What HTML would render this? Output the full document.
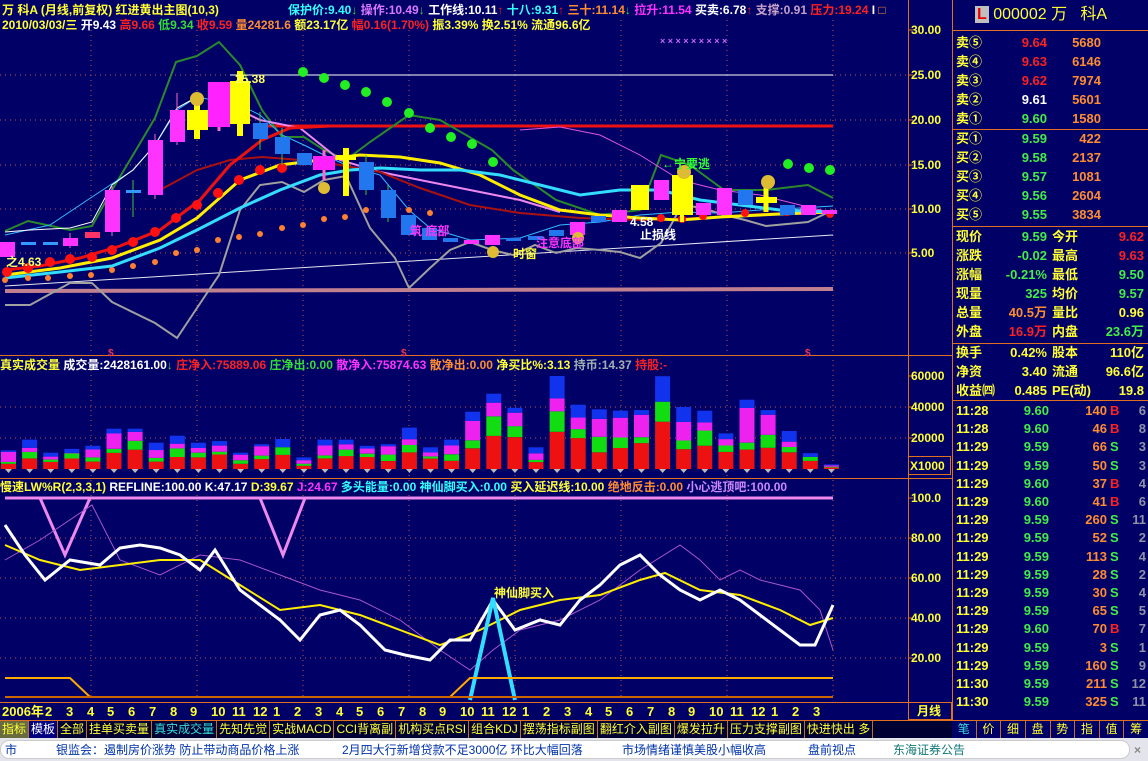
<!DOCTYPE html>
<html><head><meta charset="utf-8"><style>
*{margin:0;padding:0;box-sizing:border-box}
body{width:1148px;height:761px;background:#000066;overflow:hidden;position:relative;font-family:"Liberation Sans","Noto Sans CJK SC",sans-serif;font-weight:bold;font-size:12px}
.t{position:absolute;white-space:nowrap;line-height:14px}
.r{position:absolute;white-space:nowrap;line-height:18px;font-size:13px}
.y{color:#ffff33}.w{color:#fff}.rd{color:#ff2020}.g{color:#33dd33}.o{color:#ff8c30}.m{color:#ff33ff}.c{color:#33ffff}.gr{color:#9090a0}
.ax{position:absolute;left:911px;font-size:12px;color:#ffff33;line-height:12px}
.tb{padding:0 2px;border-right:1px solid #c07020}
</style></head><body>
<svg width="1148" height="761" style="position:absolute;left:0;top:0">
<g stroke="#c05050" stroke-dasharray="1,4" stroke-width="1">
<line x1="0" y1="75" x2="908" y2="75"/><line x1="0" y1="120" x2="908" y2="120"/><line x1="0" y1="165" x2="908" y2="165"/><line x1="0" y1="209" x2="908" y2="209"/><line x1="0" y1="253" x2="908" y2="253"/>
<line x1="91" y1="20" x2="91" y2="700"/><line x1="197" y1="20" x2="197" y2="700"/><line x1="303" y1="20" x2="303" y2="700"/><line x1="409" y1="20" x2="409" y2="700"/><line x1="515" y1="20" x2="515" y2="700"/><line x1="621" y1="20" x2="621" y2="700"/><line x1="727" y1="20" x2="727" y2="700"/><line x1="833" y1="20" x2="833" y2="700"/>
<line x1="0" y1="407" x2="908" y2="407"/><line x1="0" y1="438" x2="908" y2="438"/>
<line x1="0" y1="538" x2="908" y2="538"/><line x1="0" y1="578" x2="908" y2="578"/><line x1="0" y1="618" x2="908" y2="618"/><line x1="0" y1="658" x2="908" y2="658"/>
</g>
<g stroke="#e07020" stroke-width="1" fill="none">
<line x1="908.5" y1="0" x2="908.5" y2="720"/><line x1="952.5" y1="0" x2="952.5" y2="738"/>
<line x1="0" y1="355.5" x2="952" y2="355.5"/><line x1="0" y1="478.5" x2="952" y2="478.5"/><line x1="0" y1="702.5" x2="952" y2="702.5"/><line x1="0" y1="720.5" x2="1148" y2="720.5"/>
<line x1="952" y1="30.5" x2="1148" y2="30.5"/><line x1="952" y1="129.5" x2="1148" y2="129.5"/><line x1="952" y1="226.5" x2="1148" y2="226.5"/><line x1="952" y1="343.5" x2="1148" y2="343.5"/><line x1="952" y1="400.5" x2="1148" y2="400.5"/>
<rect x="908.5" y="456.5" width="42" height="18"/>
<rect x="908.5" y="702.5" width="43" height="17"/>
</g>
<g stroke="#e07020"><line x1="908" y1="30" x2="913" y2="30"/><line x1="908" y1="75" x2="913" y2="75"/><line x1="908" y1="120" x2="913" y2="120"/><line x1="908" y1="165" x2="913" y2="165"/><line x1="908" y1="209" x2="913" y2="209"/><line x1="908" y1="253" x2="913" y2="253"/><line x1="908" y1="376" x2="913" y2="376"/><line x1="908" y1="407" x2="913" y2="407"/><line x1="908" y1="438" x2="913" y2="438"/><line x1="908" y1="498" x2="913" y2="498"/><line x1="908" y1="538" x2="913" y2="538"/><line x1="908" y1="578" x2="913" y2="578"/><line x1="908" y1="618" x2="913" y2="618"/><line x1="908" y1="658" x2="913" y2="658"/></g>
<line x1="230" y1="75" x2="833" y2="75" stroke="#ffffff" stroke-width="1"/>
<line x1="260" y1="126" x2="833" y2="126" stroke="#ee1111" stroke-width="3"/>
<line x1="5" y1="291" x2="833" y2="289" stroke="#c08090" stroke-width="4"/>
<line x1="5" y1="286" x2="833" y2="235" stroke="#ffffff" stroke-width="1" opacity=".9"/>
<polyline fill="none" stroke="#2a8a2a" stroke-width="2" points="5,231 28,221 70,230 92,226 112,190 133,155 155,118 176,62 197,56 219,42 240,65 262,110 282,137 304,137 324,150 346,160 370,142 409,115 440,120 492,150 513,170 556,200 600,215 640,210 661,155 690,165 724,190 766,190 808,185 833,198"/>
<polyline fill="none" stroke="#a0a0a0" stroke-width="2" points="5,305 30,305 70,283 92,283 112,302 155,323 177,338 197,308 219,275 240,210 260,185 282,182 304,192 324,180 346,176 370,228 395,258 409,288 430,268 450,250 470,242 492,250 513,255 535,245 556,253 577,248 600,250 620,252 640,258 661,243 682,205 703,208 724,215 745,220 766,226 787,224 808,222 833,210"/>
<polyline fill="none" stroke="#ee88ee" stroke-width="2" points="219,100 260,120 300,128 340,160 380,172 420,180 470,190 520,200 560,212"/>
<polyline fill="none" stroke="#dd55dd" stroke-width="1" points="520,130 560,127 600,135 640,155 680,180 720,190 760,195 800,205 833,213"/>
<polyline fill="none" stroke="#33bbff" stroke-width="1" points="5,235 50,225 92,197 133,170 155,145 177,110 197,97 240,105 260,115 282,135 304,145 324,155 346,165 380,175 409,210 430,228 470,240 520,238 560,225 600,222 640,215 680,212 720,213 760,210 800,208 833,206"/>
<polyline fill="none" stroke="#ffffff" stroke-width="1" points="5,232 30,230 70,228 92,222 112,185 133,170 155,145 177,108 197,97"/>
<polyline fill="none" stroke="#aa1111" stroke-width="2" points="160,190 197,170 230,160 262,157 300,160 340,165 380,172 420,188 470,205 520,213 580,218 640,220 700,218 760,214 833,212"/>
<polyline fill="none" stroke="#ee1111" stroke-width="3" points="5,270 40,266 80,258 120,246 160,230 200,200 230,165 262,140 290,128 330,126"/>
<polyline fill="none" stroke="#ffee00" stroke-width="3" points="5,275 60,268 112,258 160,240 197,218 240,180 280,165 320,160 360,155 400,157 440,163 480,175 520,195 560,210 600,215 640,218 680,220 720,217 780,214 833,212"/>
<polyline fill="none" stroke="#33ddff" stroke-width="3" points="5,278 60,272 112,266 160,248 197,230 240,208 280,190 320,175 350,170 380,168 420,170 460,170 500,175 540,185 580,195 620,190 660,190 700,200 740,205 780,210 833,212"/>
<g fill="#22ee22"><circle cx="303" cy="72" r="5"/><circle cx="324" cy="78" r="5"/><circle cx="345" cy="85" r="5"/><circle cx="366" cy="92" r="5"/><circle cx="387" cy="102" r="5"/><circle cx="409" cy="113" r="5"/><circle cx="430" cy="128" r="5"/><circle cx="451" cy="137" r="5"/><circle cx="472" cy="144" r="5"/><circle cx="493" cy="162" r="5"/><circle cx="788" cy="164" r="5"/><circle cx="809" cy="168" r="5"/><circle cx="830" cy="170" r="5"/></g>
<g fill="#ff1111"><circle cx="7" cy="272" r="5"/><circle cx="28" cy="268" r="5"/><circle cx="50" cy="262" r="5"/><circle cx="70" cy="259" r="5"/><circle cx="92" cy="257" r="5"/><circle cx="112" cy="250" r="5"/><circle cx="133" cy="242" r="5"/><circle cx="155" cy="232" r="5"/><circle cx="176" cy="218" r="5"/><circle cx="197" cy="205" r="5"/><circle cx="218" cy="193" r="5"/><circle cx="239" cy="180" r="5"/><circle cx="260" cy="170" r="5"/><circle cx="282" cy="168" r="5"/><circle cx="661" cy="218" r="4"/><circle cx="682" cy="219" r="4"/><circle cx="703" cy="216" r="4"/><circle cx="745" cy="213" r="4"/><circle cx="787" cy="212" r="4"/><circle cx="830" cy="214" r="4"/></g>
<g fill="#ff8030"><circle cx="5" cy="280" r="3"/><circle cx="28" cy="278" r="3"/><circle cx="48" cy="278" r="3"/><circle cx="70" cy="276" r="3"/><circle cx="91" cy="275" r="3"/><circle cx="112" cy="270" r="3"/><circle cx="133" cy="266" r="3"/><circle cx="155" cy="262" r="3"/><circle cx="176" cy="253" r="3"/><circle cx="197" cy="250" r="3"/><circle cx="218" cy="240" r="3"/><circle cx="239" cy="237" r="3"/><circle cx="260" cy="234" r="3"/><circle cx="282" cy="228" r="3"/><circle cx="303" cy="225" r="3"/><circle cx="324" cy="219" r="3"/><circle cx="345" cy="217" r="3"/><circle cx="366" cy="210" r="3"/><circle cx="387" cy="208" r="3"/><circle cx="409" cy="210" r="3"/><circle cx="430" cy="213" r="3"/></g>
<g stroke-width="1">
<rect x="0" y="242" width="15" height="15" fill="#ff33ff"/>
<rect x="21" y="242" width="15" height="3" fill="#3399ff"/><rect x="43" y="242" width="15" height="3" fill="#3399ff"/>
<line x1="70" y1="233" x2="70" y2="248" stroke="#ff66cc"/><rect x="63" y="238" width="15" height="8" fill="#ff33ff"/>
<rect x="85" y="232" width="15" height="6" fill="#ff3366"/>
<line x1="112" y1="186" x2="112" y2="236" stroke="#ff66cc"/><rect x="105" y="190" width="15" height="42" fill="#ff33ff"/>
<line x1="133" y1="180" x2="133" y2="217" stroke="#33cc33"/><rect x="126" y="190" width="15" height="3" fill="#3399ff"/>
<line x1="155" y1="134" x2="155" y2="199" stroke="#ff66cc"/><rect x="148" y="140" width="15" height="55" fill="#ff33ff"/>
<line x1="177" y1="93" x2="177" y2="145" stroke="#ff66cc"/><rect x="170" y="110" width="15" height="32" fill="#ff33ff"/>
<line x1="197" y1="97" x2="197" y2="139" stroke="#ffff00" stroke-width="6"/><rect x="187" y="110" width="21" height="20" fill="#ffff00"/>
<line x1="219" y1="82" x2="219" y2="131" stroke="#ff66cc" stroke-width="3"/><rect x="208" y="82" width="22" height="45" fill="#ff22ff"/>
<line x1="240" y1="71" x2="240" y2="136" stroke="#ffff00" stroke-width="6"/><rect x="230" y="81" width="20" height="43" fill="#ffff00"/>
<line x1="260" y1="112" x2="260" y2="150" stroke="#33cc33"/><rect x="253" y="123" width="15" height="16" fill="#2277ee"/>
<line x1="282" y1="128" x2="282" y2="165" stroke="#33cc33"/><rect x="275" y="137" width="15" height="17" fill="#2277ee"/>
<rect x="297" y="153" width="15" height="12" fill="#2277ee"/>
<line x1="324" y1="150" x2="324" y2="180" stroke="#ff66cc" stroke-width="3"/><rect x="313" y="156" width="22" height="14" fill="#ff22ff"/>
<line x1="346" y1="148" x2="346" y2="196" stroke="#ffff00" stroke-width="6"/><rect x="336" y="155" width="20" height="5" fill="#ffff00"/>
<line x1="366" y1="155" x2="366" y2="195" stroke="#33cc33"/><rect x="359" y="162" width="15" height="28" fill="#2277ee"/>
<line x1="388" y1="185" x2="388" y2="222" stroke="#33cc33"/><rect x="381" y="190" width="15" height="28" fill="#2277ee"/>
<rect x="401" y="215" width="15" height="20" fill="#2277ee"/>
<rect x="422" y="228" width="15" height="12" fill="#2277ee"/>
<rect x="443" y="238" width="15" height="4" fill="#2277ee"/>
<rect x="464" y="240" width="15" height="4" fill="#ff33ff"/>
<rect x="485" y="235" width="15" height="10" fill="#ff33ff"/>
<rect x="506" y="238" width="15" height="3" fill="#2277ee"/>
<rect x="528" y="236" width="15" height="4" fill="#2277ee"/>
<rect x="549" y="230" width="15" height="6" fill="#2277ee"/>
<rect x="570" y="222" width="15" height="13" fill="#ff33ff"/>
<rect x="591" y="216" width="15" height="6" fill="#2277ee"/>
<rect x="612" y="210" width="15" height="12" fill="#ff33ff"/>
<rect x="631" y="185" width="18" height="25" fill="#ffff00"/>
<rect x="654" y="180" width="15" height="20" fill="#ff33ff"/>
<line x1="682" y1="170" x2="682" y2="222" stroke="#ffff00" stroke-width="4"/><rect x="672" y="175" width="21" height="40" fill="#ffff00"/>
<rect x="696" y="203" width="15" height="12" fill="#ff33ff"/>
<rect x="717" y="188" width="15" height="27" fill="#ff33ff"/>
<rect x="738" y="190" width="15" height="15" fill="#2277ee"/>
<line x1="766" y1="180" x2="766" y2="212" stroke="#ffff00" stroke-width="5"/><rect x="756" y="197" width="21" height="6" fill="#ffff00"/>
<rect x="780" y="205" width="15" height="10" fill="#2277ee"/>
<rect x="801" y="205" width="15" height="10" fill="#ff33ff"/>
<rect x="822" y="210" width="15" height="4" fill="#ff33ff"/>
</g>
<g fill="#ddbb33"><circle cx="197" cy="99" r="7"/><circle cx="324" cy="188" r="6"/><circle cx="493" cy="252" r="6"/><circle cx="578" cy="238" r="6"/><circle cx="684" cy="172" r="7"/><circle cx="768" cy="182" r="7"/></g>
<g fill="#cc66ff" font-size="9"><text x="660" y="44">× × × × × × × × ×</text></g>
<g fill="#ee3355"><text x="108" y="356" font-size="10">$</text><text x="401" y="356" font-size="10">$</text><text x="805" y="356" font-size="10">$</text></g>
<g id="vol"></g>
<line x1="5" y1="498" x2="833" y2="498" stroke="#ee88ee" stroke-width="3"/>
<polyline fill="none" stroke="#ee88ee" stroke-width="3" points="40,498 65,555 90,498"/>
<polyline fill="none" stroke="#ee88ee" stroke-width="3" points="260,498 283,555 305,498"/>
<polyline fill="none" stroke="#aa55cc" stroke-width="1" points="5,560 40,540 92,505 120,560 160,575 200,555 240,560 280,575 320,590 360,600 400,620 440,650 470,670 493,650 520,630 560,620 600,600 640,570 680,545 700,560 720,580 740,570 760,580 800,590 820,610 833,650"/>
<polyline fill="none" stroke="#ffee00" stroke-width="2" points="5,545 40,560 80,570 120,565 160,560 200,560 240,585 280,610 320,605 360,615 400,630 440,645 480,630 520,610 560,600 600,595 640,580 665,573 700,590 740,595 780,610 810,625 833,618"/>
<polyline fill="none" stroke="#ffffff" stroke-width="3" points="5,525 25,555 45,580 70,560 100,565 120,548 140,545 160,548 180,555 200,570 215,550 240,590 260,605 280,620 300,640 320,615 340,610 360,625 385,650 405,655 430,660 450,640 470,640 493,600 515,630 540,620 560,625 580,600 600,585 620,565 640,555 660,575 680,590 700,600 720,590 740,600 760,615 780,630 800,645 815,645 833,605"/>
<polyline fill="none" stroke="#33ddff" stroke-width="4" points="470,700 493,598 515,700"/>
<polyline fill="none" stroke="#ffaa00" stroke-width="2" points="5,678 70,678 90,697 450,697 470,678 833,678"/>
<line x1="5" y1="697" x2="833" y2="697" stroke="#cc6600" stroke-width="2"/>
</svg>
<script>
(function(){var h=[12,19,10.5,13,15,26,26,17,21.5,17,18,10.5,16,19,7.5,19,19,15,16,26.7,14,19,37,48.6,39.5,14,60,41.5,38.5,37.6,38,58.7,40,37.6,23,44.7,38,24.5,10,3];
var s='';var base=469;for(var i=0;i<h.length;i++){var x=8+21.1*i-7,H=h[i]*1.55,f=[[.4,'#ee1111'],[.18,'#11dd11'],[.3,'#ee22ee'],[.12,'#1133ee']];
var k=(i*37)%7/10;f[0][0]=.28+k*.4;f[1][0]=.1+((i*13)%5)/25;f[3][0]=.08+((i*11)%6)/25;f[2][0]=Math.max(0,1-f[0][0]-f[1][0]-f[3][0]);
var y=base;for(var j=0;j<4;j++){var hh=H*f[j][0];y-=hh;s+='<rect x="'+x.toFixed(1)+'" y="'+y.toFixed(1)+'" width="15" height="'+hh.toFixed(1)+'" fill="'+f[j][1]+'"/>';}
s+='<polygon points="'+(x+4)+','+base+' '+(x+11)+','+base+' '+(x+7.5)+','+(base+4)+'" fill="#bbbbbb"/>';}
document.getElementById('vol').innerHTML=s;})();
</script>
<div class="t y" style="left:2px;top:3px">万 科A (月线,前复权) 红进黄出主图(10,3)</div>
<div class="t" style="left:288px;top:3px"><span class="c">保护价:9.40</span><span class="g">↓</span> <span class="m" style="color:#dd77ff">操作:10.49</span><span class="g">↓</span> <span class="w">工作线:10.11</span><span class="rd">↑</span> <span class="c">十八:9.31</span><span class="rd">↑</span> <span class="o">三十:11.14</span><span class="g">↓</span> <span class="m">拉升:11.54</span> <span class="w">买卖:6.78</span><span class="rd">↑</span> <span style="color:#c8a0c8">支撑:0.91</span> <span class="rd">压力:19.24</span> <span class="w">I</span> <span style="color:#ff8c30">□</span></div>
<div class="t" style="left:2px;top:18px"><span class="y">2010/03/03/三</span> <span class="w">开9.43</span> <span class="rd">高9.66</span> <span class="g">低9.34</span> <span class="rd">收9.59</span> <span class="o">量24281.6</span> <span class="y">额23.17亿</span> <span class="rd">幅0.16(1.70%)</span> <span class="y">振3.39%</span> <span class="y">换2.51%</span> <span class="y">流通96.6亿</span></div>
<div class="t" style="left:235px;top:72px;color:#ffff66">25.38</div>
<div class="t" style="left:662px;top:157px;color:#33ff33">←宁要逃</div>
<div class="t" style="left:6px;top:255px;color:#ffff66">之4.63</div>
<div class="t" style="left:410px;top:224px;color:#ff33ff">筑 底部</div>
<div class="t" style="left:513px;top:247px;color:#ffff33">时窗</div>
<div class="t" style="left:536px;top:236px;color:#ff33ff">注意底部</div>
<div class="t" style="left:630px;top:215px;color:#ffffff">4.58</div>
<div class="t" style="left:640px;top:228px;color:#ffffff">止损线</div>
<div class="ax" style="top:24px">30.00</div><div class="ax" style="top:69px">25.00</div><div class="ax" style="top:114px">20.00</div><div class="ax" style="top:159px">15.00</div><div class="ax" style="top:203px">10.00</div><div class="ax" style="top:247px">5.00</div>
<div class="ax" style="top:370px">60000</div><div class="ax" style="top:401px">40000</div><div class="ax" style="top:432px">20000</div><div class="ax" style="top:460px;left:910px">X1000</div>
<div class="ax" style="top:492px">100.0</div><div class="ax" style="top:532px">80.00</div><div class="ax" style="top:572px">60.00</div><div class="ax" style="top:612px">40.00</div><div class="ax" style="top:652px">20.00</div>
<div class="ax" style="top:705px;left:917px">月线</div>
<div class="t" style="left:0;top:358px"><span class="y">真实成交量</span> <span class="w">成交量:2428161.00</span><span class="g">↓</span> <span class="rd">庄净入:75889.06</span> <span class="g">庄净出:0.00</span> <span class="m">散净入:75874.63</span> <span class="o">散净出:0.00</span> <span class="y">净买比%:3.13</span> <span class="gr" style="color:#a0b0b0">持币:14.37</span> <span class="rd">持股:-</span></div>
<div class="t" style="left:0;top:480px"><span class="y">慢速LW%R(2,3,3,1)</span> <span class="w">REFLINE:100.00</span> <span class="w">K:47.17</span> <span class="y">D:39.67</span> <span class="m">J:24.67</span> <span class="c">多头能量:0.00</span> <span class="c">神仙脚买入:0.00</span> <span class="y">买入延迟线:10.00</span> <span class="o">绝地反击:0.00</span> <span style="color:#cc88ff">小心逃顶吧:100.00</span></div>
<div class="t y" style="left:494px;top:586px">神仙脚买入</div>
<div class="t y" style="left:2px;top:705px;font-size:13px">2006年</div>
<div id="dates"></div>
<script>(function(){var m=[2,3,4,5,6,7,8,9,10,11,12,1,2,3,4,5,6,7,8,9,10,11,12,1,2,3,4,5,6,7,8,9,10,11,12,1,2,3];var s='';for(var i=0;i<m.length;i++){s+='<div class="t y" style="left:'+(45+i*20.75).toFixed(0)+'px;top:705px;font-size:13px">'+m[i]+'</div>';}document.getElementById('dates').innerHTML=s;})();</script>
<div style="position:absolute;left:0;top:721px;width:952px;height:17px;background:#000033;display:flex;font-weight:normal;font-size:12px;line-height:17px;color:#ffff33;overflow:hidden">
<span style="background:#6a6a40;padding:0 2px;border-right:1px solid #c07020">指标</span><span style="background:#000080;padding:0 2px;border-right:1px solid #c07020;color:#fff">模板</span><span class="tb">全部</span><span class="tb">挂单买卖量</span><span class="tb" style="color:#33dddd">真实成交量</span><span class="tb">先知先觉</span><span class="tb">实战MACD</span><span class="tb">CCI背离副</span><span class="tb">机构买点RSI</span><span class="tb">组合KDJ</span><span class="tb">摆荡指标副图</span><span class="tb">翻红介入副图</span><span class="tb">爆发拉升</span><span class="tb">压力支撑副图</span><span class="tb">快进快出 多</span>
</div>
<div style="position:absolute;left:952px;top:721px;width:196px;height:17px;display:flex;background:#000066;font-weight:normal;font-size:12px;line-height:17px;color:#ffff33"><span style="flex:1;text-align:center;color:#33dddd;border-right:1px solid #c07020">笔</span><span style="flex:1;text-align:center;border-right:1px solid #c07020">价</span><span style="flex:1;text-align:center;border-right:1px solid #c07020">细</span><span style="flex:1;text-align:center;border-right:1px solid #c07020">盘</span><span style="flex:1;text-align:center;border-right:1px solid #c07020">势</span><span style="flex:1;text-align:center;border-right:1px solid #c07020">指</span><span style="flex:1;text-align:center;border-right:1px solid #c07020">值</span><span style="flex:1;text-align:center">筹</span></div>
<div style="position:absolute;left:0;top:738px;width:1148px;height:23px;background:#e4e4ec"></div>
<div style="position:absolute;left:0;top:740px;width:1130px;height:19px;background:#fff;border-radius:9px;border:1px solid #ccc"></div>
<div class="t" style="left:5px;top:743px;font-weight:normal;color:#0033aa">市</div>
<div class="t" style="left:56px;top:743px;font-weight:normal;color:#0033aa">银监会：遏制房价涨势 防止带动商品价格上涨</div>
<div class="t" style="left:342px;top:743px;font-weight:normal;color:#0033aa">2月四大行新增贷款不足3000亿 环比大幅回落</div>
<div class="t" style="left:622px;top:743px;font-weight:normal;color:#0033aa">市场情绪谨慎美股小幅收高</div>
<div class="t" style="left:808px;top:743px;font-weight:normal;color:#0033aa">盘前视点</div>
<div class="t" style="left:893px;top:743px;font-weight:normal;color:#117777">东海证券公告</div>
<div class="t" style="left:1134px;top:743px;color:#888">×</div>
<div class="r" style="left:975px;top:6px;font-size:16px;color:#ffff33;font-weight:normal"><span style="background:#c0c0c0;color:#e00;font-weight:bold;padding:0 2px">L</span> 000002 万&nbsp;&nbsp;&nbsp;科A</div>
<div id="rp"></div>
<script>(function(){var s='';function row(y,a){for(var i=0;i<a.length;i++){var e=a[i];s+='<div class="r" style="top:'+y+'px;'+(e[3]?'right:'+(1148-e[0])+'px':'left:'+e[0]+'px')+';color:'+e[2]+'">'+e[1]+'</div>';}}
var Y='#ffff33',R='#ff2020',G='#44ee44',O='#ff8c30',W='#fff';
var sells=[['卖⑤','9.64',R,'5680'],['卖④','9.63',R,'6146'],['卖③','9.62',R,'7974'],['卖②','9.61',W,'5601'],['卖①','9.60',G,'1580']];
for(var i=0;i<5;i++){var y=34+i*19;row(y,[[956,sells[i][0],Y],[1047,sells[i][1],sells[i][2],1],[1101,sells[i][3],O,1]]);}
var buys=[['买①','9.59','422'],['买②','9.58','2137'],['买③','9.57','1081'],['买④','9.56','2604'],['买⑤','9.55','3834']];
for(var i=0;i<5;i++){var y=130+i*19;row(y,[[956,buys[i][0],Y],[1047,buys[i][1],G,1],[1101,buys[i][2],O,1]]);}
var info=[['现价','9.59',G,'今开','9.62',R],['涨跌','-0.02',G,'最高','9.63',R],['涨幅','-0.21%',G,'最低','9.50',G],['现量','325',G,'均价','9.57',G],['总量','40.5万',O,'量比','0.96',Y],['外盘','16.9万',R,'内盘','23.6万',G]];
for(var i=0;i<6;i++){var y=228+i*19;var a=info[i];row(y,[[956,a[0],Y],[1047,a[1],a[2],1],[1052,a[3],Y],[1144,a[4],a[5],1]]);}
var info2=[['换手','0.42%','股本','110亿'],['净资','3.40','流通','96.6亿'],['收益㈣','0.485','PE(动)','19.8']];
for(var i=0;i<3;i++){var y=344+i*19;var a=info2[i];row(y,[[956,a[0],Y],[1047,a[1],Y,1],[1052,a[2],Y],[1144,a[3],Y,1]]);}
var t=[['11:28','9.60','140','B','6'],['11:28','9.60','46','B','8'],['11:29','9.59','66','S','3'],['11:29','9.59','50','S','3'],['11:29','9.60','37','B','4'],['11:29','9.60','41','B','6'],['11:29','9.59','260','S','11'],['11:29','9.59','52','S','2'],['11:29','9.59','113','S','4'],['11:29','9.59','28','S','2'],['11:29','9.59','30','S','4'],['11:29','9.59','65','S','5'],['11:29','9.60','70','B','7'],['11:29','9.59','3','S','1'],['11:29','9.59','160','S','9'],['11:30','9.59','211','S','12'],['11:30','9.59','325','S','11']];
for(var i=0;i<t.length;i++){var y=402+i*18.2;var a=t[i];row(y.toFixed(0),[[956,a[0],Y],[1049,a[1],G,1],[1107,a[2],O,1],[1110,a[3],a[3]=='B'?R:G],[1146,a[4],'#9090a8',1]]);}
document.getElementById('rp').innerHTML=s;})();</script>
</body></html>
